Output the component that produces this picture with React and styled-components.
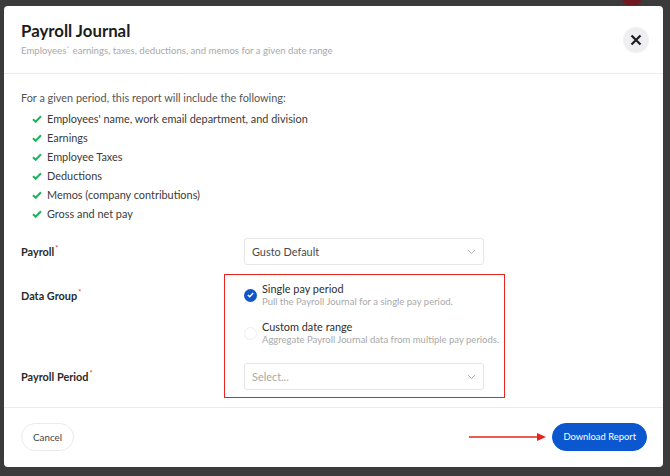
import styled, { createGlobalStyle } from 'styled-components';

const GlobalStyle = createGlobalStyle`
  html, body {
    margin: 0;
    padding: 0;
    background: #3b3b3b;
    font-family: 'Lato', 'Open Sans', sans-serif;
  }
`;

const Page = styled.div`
  position: relative;
  width: 670px;
  height: 476px;
  padding: 6px 7px 0 4px;
  box-sizing: border-box;
  overflow: hidden;
`;

const Badge = styled.div`
  position: absolute;
  top: -8px;
  left: 622px;
  width: 20px;
  height: 13px;
  border-radius: 7px;
  background: #6e1a1e;
`;

const Modal = styled.div`
  position: relative;
  background: #fff;
  border-radius: 4px;
  height: 461px;
  display: flex;
  flex-direction: column;
`;

const Header = styled.div`
  display: flex;
  justify-content: space-between;
  align-items: flex-start;
  padding: 15px 14px 0 17px;
  height: 68px;
  box-sizing: border-box;
  border-bottom: 1px solid #ececec;
`;

const Title = styled.h1`
  margin: 0;
  font-size: 16.8px;
  font-weight: 700;
  color: #1c1c1c;
  line-height: 20px;
`;

const Subtitle = styled.p`
  margin: 4px 0 0;
  font-size: 9.6px;
  color: #a9a9a9;
`;

const CloseButton = styled.button`
  width: 26px;
  height: 26px;
  margin-top: 6px;
  border-radius: 50%;
  border: none;
  background: #efeff1;
  display: flex;
  align-items: center;
  justify-content: center;
  padding: 0;
`;

const Body = styled.div`
  padding: 16px 17px 0;
  flex: 1;
  position: relative;
`;

const Intro = styled.p`
  margin: 0;
  font-size: 10.9px;
  color: #555;
  line-height: 16px;
`;

const List = styled.ul`
  list-style: none;
  margin: 3px 0 0;
  padding: 0 0 0 11px;
`;

const Item = styled.li`
  display: flex;
  align-items: center;
  gap: 5px;
  height: 19px;
  font-size: 10.9px;
  color: #3a3a3a;
`;

const FormRow = styled.div`
  display: grid;
  grid-template-columns: 223px 240px;
  align-items: ${(p) => p.$align || 'center'};
  margin-top: ${(p) => p.$top}px;
`;

const Label = styled.div`
  font-size: 10.9px;
  line-height: 14px;
  font-weight: 700;
  color: #2a2a2a;
  margin-top: ${(p) => p.$offset || 0}px;
  sup {
    color: #e0483e;
    font-size: 7px;
    line-height: 0;
    vertical-align: 0;
    position: relative;
    top: -5px;
    margin-left: 1px;
  }
`;

const Select = styled.div`
  height: 27px;
  box-sizing: border-box;
  border: 1px solid #e6e6e6;
  border-radius: 3px;
  display: flex;
  align-items: center;
  justify-content: space-between;
  padding: 0 7px 0 7px;
  font-size: 10.9px;
  color: ${(p) => (p.$placeholder ? '#a8a8a8' : '#4a4a4a')};
`;

const Options = styled.div`
  display: flex;
  flex-direction: column;
  gap: 12px;
  white-space: nowrap;
`;

const Option = styled.div`
  display: flex;
  align-items: center;
  gap: 5px;
`;

const Radio = styled.div`
  width: 13px;
  height: 13px;
  flex-shrink: 0;
  border-radius: 50%;
  box-sizing: border-box;
  border: ${(p) => (p.$checked ? 'none' : '1px solid #eeeeee')};
  background: ${(p) => (p.$checked ? '#1155cc' : '#fff')};
  display: flex;
  align-items: center;
  justify-content: center;
`;

const OptionTitle = styled.div`
  font-size: 10.9px;
  color: #2e2e2e;
  line-height: 14px;
`;

const OptionHint = styled.div`
  font-size: 9.5px;
  color: #a9a9a9;
  line-height: 12px;
`;

const Highlight = styled.div`
  position: absolute;
  left: 220px;
  top: 200px;
  width: 279px;
  height: 122px;
  border: 1.5px solid #e8231b;
  pointer-events: none;
`;

const Footer = styled.div`
  height: 60px;
  border-top: 1px solid #ececec;
  display: flex;
  align-items: center;
  padding: 0 16px 2px 17px;
  box-sizing: border-box;
`;

const Pill = styled.button`
  height: 28px;
  border-radius: 14px;
  padding: 0 ${(p) => (p.$primary ? '10px' : '11px')};
  font-family: inherit;
  font-size: ${(p) => (p.$primary ? '9.4px' : '9.8px')};
  border: 1px solid ${(p) => (p.$primary ? '#0b57d0' : '#ebebeb')};
  background: ${(p) => (p.$primary ? '#0b57d0' : '#fff')};
  color: ${(p) => (p.$primary ? '#fff' : '#444')};
`;

const Arrow = styled.svg`
  margin-left: auto;
  margin-right: 3px;
`;

const Check = () => (
  <svg width="10" height="8" viewBox="0 0 10 8">
    <path d="M1 4.2 L3.7 6.8 L9 1.3" fill="none" stroke="#1fb35a" strokeWidth="2" />
  </svg>
);

const Chevron = () => (
  <svg width="9" height="6" viewBox="0 0 9 6">
    <path d="M1 1 L4.5 4.5 L8 1" fill="none" stroke="#b5b5b5" strokeWidth="1" />
  </svg>
);

const items = [
  "Employees' name, work email department, and division",
  'Earnings',
  'Employee Taxes',
  'Deductions',
  'Memos (company contributions)',
  'Gross and net pay',
];

export default function App() {
  return (
    <>
      <GlobalStyle />
      <Page>
        <Badge />
        <Modal>
          <Header>
            <div>
              <Title>Payroll Journal</Title>
              <Subtitle>Employees` earnings, taxes, deductions, and memos for a given date range</Subtitle>
            </div>
            <CloseButton aria-label="Close">
              <svg width="12" height="12" viewBox="0 0 12 12">
                <path d="M1.5 1.5 L10.5 10.5 M10.5 1.5 L1.5 10.5" stroke="#1e1e1e" strokeWidth="2.2" />
              </svg>
            </CloseButton>
          </Header>
          <Body>
            <Intro>For a given period, this report will include the following:</Intro>
            <List>
              {items.map((t) => (
                <Item key={t}>
                  <Check />
                  {t}
                </Item>
              ))}
            </List>
            <FormRow $top={15}>
              <Label>Payroll<sup>*</sup></Label>
              <Select>
                Gusto Default
                <Chevron />
              </Select>
            </FormRow>
            <FormRow $top={17} $align="start">
              <Label $offset={7}>Data Group<sup>*</sup></Label>
              <Options>
                <Option>
                  <Radio $checked>
                    <svg width="7" height="6" viewBox="0 0 7 6">
                      <path d="M0.8 3 L2.7 4.8 L6.2 1" fill="none" stroke="#fff" strokeWidth="1.5" />
                    </svg>
                  </Radio>
                  <div>
                    <OptionTitle>Single pay period</OptionTitle>
                    <OptionHint>Pull the Payroll Journal for a single pay period.</OptionHint>
                  </div>
                </Option>
                <Option>
                  <Radio />
                  <div>
                    <OptionTitle>Custom date range</OptionTitle>
                    <OptionHint>Aggregate Payroll Journal data from multiple pay periods.</OptionHint>
                  </div>
                </Option>
              </Options>
            </FormRow>
            <FormRow $top={17}>
              <Label>Payroll Period<sup>*</sup></Label>
              <Select $placeholder>
                Select...
                <Chevron />
              </Select>
            </FormRow>
            <Highlight />
          </Body>
          <Footer>
            <Pill>Cancel</Pill>
            <Arrow width="80" height="10" viewBox="0 0 80 10">
              <path d="M0 5 H70" stroke="#e8231b" strokeWidth="1.6" />
              <path d="M68 1 L77 5 L68 9 Z" fill="#e8231b" />
            </Arrow>
            <Pill $primary>Download Report</Pill>
          </Footer>
        </Modal>
      </Page>
    </>
  );
}
